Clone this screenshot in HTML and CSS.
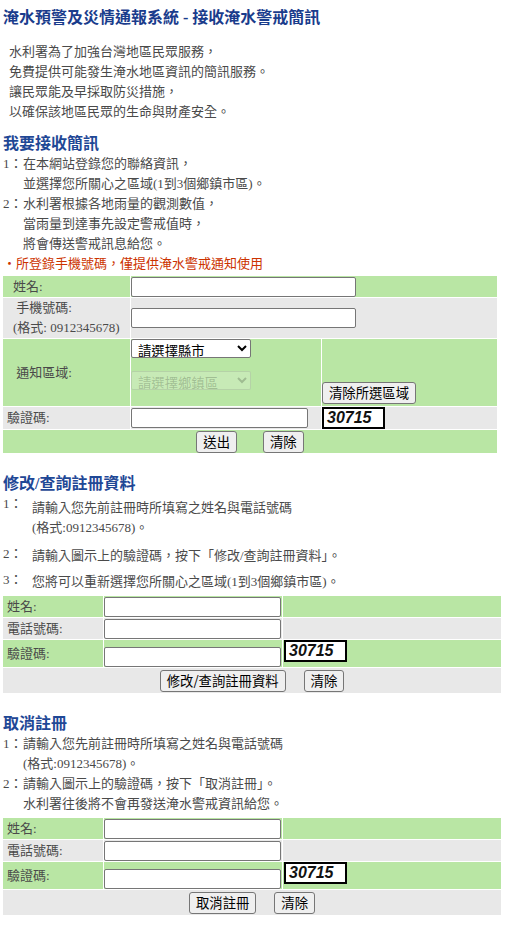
FILE: index.html
```html
<!DOCTYPE html>
<html lang="zh-Hant">
<head>
    <meta charset="UTF-8">
    <meta name="viewport" content="width=device-width, initial-scale=1.0">
    <title>淹水預警及災情通報系統 - 接收淹水警戒簡訊</title>
    <link rel="stylesheet" href="styles.css">
</head>
<body>

<div class="page">
    <h1 class="page-title">淹水預警及災情通報系統 - 接收淹水警戒簡訊</h1>

    <div class="intro">
        水利署為了加強台灣地區民眾服務，<br>
        免費提供可能發生淹水地區資訊的簡訊服務。<br>
        讓民眾能及早採取防災措施，<br>
        以確保該地區民眾的生命與財產安全。
    </div>

    <!-- 我要接收簡訊 -->
    <h2 class="section-title first">我要接收簡訊</h2>
    <div class="steps">
        <div class="step"><span class="num">1：</span><span>在本網站登錄您的聯絡資訊，<br>並選擇您所關心之區域(1到3個鄉鎮市區)。</span></div>
        <div class="step"><span class="num">2：</span><span>水利署根據各地雨量的觀測數值，<br>當雨量到達事先設定警戒值時，<br>將會傳送警戒訊息給您。</span></div>
    </div>
    <div class="note">‧所登錄手機號碼，僅提供淹水警戒通知使用</div>

    <table class="form-table signup">
        <colgroup>
            <col class="col-label">
            <col class="col-field">
            <col>
        </colgroup>
        <tr class="green r1">
            <td class="label indent">姓名:</td>
            <td colspan="2"><input type="text" class="wide"></td>
        </tr>
        <tr class="gray r2">
            <td class="label indent">&nbsp;手機號碼:<br>(格式: 0912345678)</td>
            <td colspan="2"><input type="text" class="wide"></td>
        </tr>
        <tr class="green r3">
            <td class="label indent">&nbsp;通知區域:</td>
            <td class="area-cell">
                <select class="area-select">
                    <option>請選擇縣市</option>
                </select>
                <select class="area-select second" disabled>
                    <option>請選擇鄉鎮區</option>
                </select>
            </td>
            <td class="clear-cell"><button type="button">清除所選區域</button></td>
        </tr>
        <tr class="gray r4">
            <td class="label">驗證碼:</td>
            <td><input type="text" class="code-input"></td>
            <td><span class="captcha">30715</span></td>
        </tr>
        <tr class="green r5">
            <td colspan="3" class="actions"><button type="button">送出</button><button type="button" class="gap-wide">清除</button></td>
        </tr>
    </table>

    <!-- 修改/查詢註冊資料 -->
    <h2 class="section-title">修改/查詢註冊資料</h2>
    <div class="steps spaced">
        <div class="step s1"><span class="num">1：</span><span class="text">請輸入您先前註冊時所填寫之姓名與電話號碼<br>(格式:0912345678)。</span></div>
        <div class="step s2"><span class="num">2：</span><span class="text">請輸入圖示上的驗證碼，按下「修改/查詢註冊資料」。</span></div>
        <div class="step s3"><span class="num">3：</span><span class="text">您將可以重新選擇您所關心之區域(1到3個鄉鎮市區)。</span></div>
    </div>

    <table class="form-table small">
        <colgroup>
            <col class="col-label">
            <col class="col-field">
            <col>
        </colgroup>
        <tr class="green sr1">
            <td class="label">姓名:</td>
            <td><input type="text"></td>
            <td></td>
        </tr>
        <tr class="gray sr2">
            <td class="label">電話號碼:</td>
            <td><input type="text"></td>
            <td></td>
        </tr>
        <tr class="green sr3">
            <td class="label">驗證碼:</td>
            <td class="code-cell"><input type="text"></td>
            <td class="captcha-cell"><span class="captcha">30715</span></td>
        </tr>
        <tr class="gray sr4">
            <td colspan="3" class="actions"><button type="button">修改/查詢註冊資料</button><button type="button">清除</button></td>
        </tr>
    </table>

    <!-- 取消註冊 -->
    <h2 class="section-title">取消註冊</h2>
    <div class="steps">
        <div class="step"><span class="num">1：</span><span>請輸入您先前註冊時所填寫之姓名與電話號碼<br>(格式:0912345678)。</span></div>
        <div class="step"><span class="num">2：</span><span>請輸入圖示上的驗證碼，按下「取消註冊」。<br>水利署往後將不會再發送淹水警戒資訊給您。</span></div>
    </div>

    <table class="form-table small">
        <colgroup>
            <col class="col-label">
            <col class="col-field">
            <col>
        </colgroup>
        <tr class="green sr1">
            <td class="label">姓名:</td>
            <td><input type="text"></td>
            <td></td>
        </tr>
        <tr class="gray sr2">
            <td class="label">電話號碼:</td>
            <td><input type="text"></td>
            <td></td>
        </tr>
        <tr class="green sr3">
            <td class="label">驗證碼:</td>
            <td class="code-cell"><input type="text"></td>
            <td class="captcha-cell"><span class="captcha">30715</span></td>
        </tr>
        <tr class="gray sr4">
            <td colspan="3" class="actions"><button type="button">取消註冊</button><button type="button">清除</button></td>
        </tr>
    </table>
</div>

</body>
</html>
```

FILE: styles.css
```css
body {
    margin: 0;
    padding: 0;
    background-color: #ffffff;
    color: #4a4a4a;
    font-family: "Liberation Serif", "Noto Sans CJK TC", serif;
    font-size: 13px;
    line-height: 20px;
}

.page {
    padding: 0 2px;
}

.page-title {
    margin: 8px 0 0;
    padding-left: 1px;
    font-size: 16px;
    line-height: 20px;
    font-weight: bold;
    color: #1a3c8c;
}

.intro {
    margin-top: 14px;
    padding-left: 7px;
}

.section-title {
    margin: 20px 0 0;
    padding-left: 1px;
    font-size: 16px;
    line-height: 20px;
    font-weight: bold;
    color: #1f4896;
}

.section-title.first {
    margin-top: 12px;
}

.steps {
    padding-left: 1px;
}

.step {
    display: flex;
}

.step .num {
    flex: 0 0 20px;
}

/* second block: numbers sit in their own column */
.spaced .step .num {
    flex-basis: 29px;
}

.spaced .s1 .text {
    padding-top: 4px;
}

.spaced .s2 {
    margin-top: 6px;
}

.spaced .s3 {
    margin-top: 4px;
}

.spaced .s2 .text,
.spaced .s3 .text {
    padding-top: 2px;
}

.note {
    padding-left: 1px;
    color: #cc3300;
}

/* form tables */
.form-table {
    border-collapse: separate;
    border-spacing: 1px;
    table-layout: fixed;
    margin-top: 1px;
}

.form-table td {
    padding: 0;
    vertical-align: middle;
}

.green td {
    background-color: #b9e6a4;
}

.gray td {
    background-color: #e8e8e8;
}

.signup {
    width: 496px;
}

.signup .col-label {
    width: 127px;
}

.signup .col-field {
    width: 190px;
}

.label {
    padding-left: 4px !important;
}

.label.indent {
    padding-left: 10px !important;
}

.r1 td { height: 21px; }
.r2 td { height: 40px; }
.r3 td { height: 65px; }
.r4 td { height: 22px; }
.r5 td { height: 23px; }

input[type="text"] {
    display: block;
    box-sizing: border-box;
    width: 177px;
    height: 20px;
    margin: 0;
    padding: 1px 2px;
    border: 1px solid #767676;
    border-radius: 2px;
    background: #ffffff;
    font-size: 13px;
}

input.wide {
    width: 225px;
}

.area-cell {
    vertical-align: top !important;
}

.area-select {
    display: block;
    box-sizing: border-box;
    width: 120px;
    height: 19px;
    margin: 0;
    padding: 0 2px;
    font-family: "Noto Sans CJK TC", sans-serif;
    font-size: 13.33px;
    color: #000000;
    border: 1px solid #767676;
    border-radius: 2px;
    background-color: #ffffff;
}

.area-select.second {
    margin-top: 13px;
    color: rgba(16, 16, 16, 0.3);
    border-color: rgba(118, 118, 118, 0.3);
    background-color: rgba(255, 255, 255, 0.3);
}

.clear-cell {
    vertical-align: bottom !important;
    padding-bottom: 2px !important;
}

button {
    box-sizing: border-box;
    height: 22px;
    margin: 0;
    padding: 0 6px;
    font-family: "Noto Sans CJK TC", sans-serif;
    font-size: 13.33px;
    line-height: 18px;
    color: #000000;
    background-color: #efefef;
    border: 1px solid #767676;
    border-radius: 3px;
}

.actions {
    text-align: center;
}

.actions button + button {
    margin-left: 18px;
}

.actions button.gap-wide {
    margin-left: 26px;
}

.captcha {
    display: inline-block;
    box-sizing: border-box;
    width: 63px;
    height: 22px;
    padding-left: 3px;
    border: 2px solid #000000;
    background: #ffffff;
    color: #111111;
    font-family: "Liberation Sans", Arial, sans-serif;
    font-size: 16px;
    font-weight: bold;
    font-style: italic;
    line-height: 18px;
    vertical-align: top;
}

/* smaller tables for edit / cancel */
.small {
    width: 500px;
    margin-top: 3px;
}

.small .col-label {
    width: 100px;
}

.small .col-field {
    width: 178px;
}

.sr1 td { height: 21px; }
.sr2 td { height: 21px; }
.sr3 td { height: 27px; }
.sr4 td { height: 25px; }

.code-cell {
    vertical-align: bottom !important;
}

.captcha-cell {
    vertical-align: top !important;
    padding-left: 1px !important;
}
```
